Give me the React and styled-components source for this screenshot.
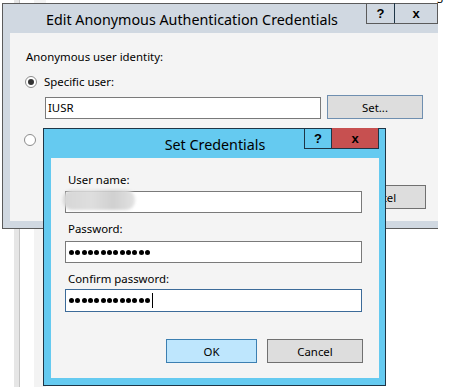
import React from 'react'
import styled, { createGlobalStyle } from 'styled-components'

const GlobalStyle = createGlobalStyle`
  html, body {
    margin: 0;
    padding: 0;
    background: #ffffff;
  }
  body {
    font-family: "Noto Sans", "Open Sans", sans-serif;
    font-size: 12px;
    color: #000;
  }
`

const font = `"Noto Sans", "Open Sans", sans-serif`

const Desktop = styled.div`
  position: relative;
  width: 459px;
  height: 387px;
  overflow: hidden;
  background: #fff;
`

/* the IIS manager list behind the dialogs */
const ListRow = styled.div`
  position: absolute;
  left: 42px;
  top: -12px;
  display: flex;
  font-family: ${font};
  font-size: 11.5px;
  line-height: 15px;
  white-space: nowrap;
  span:nth-child(1) { width: 194px; }
  span:nth-child(2) { width: 106px; }
`

const Splitter = styled.div`
  position: absolute;
  left: 14px;
  top: 0;
  width: 6px;
  height: 387px;
  background: #e6e6e6;
  border-right: 1px solid #c4c4c4;
  box-sizing: border-box;
`

const Pane = styled.div`
  position: absolute;
  left: 34px;
  top: 0;
  width: 12px;
  height: 387px;
  background: #f3f3f3;
`

const Window = styled.div`
  position: absolute;
  left: ${p => p.$x}px;
  top: ${p => p.$y}px;
  width: ${p => p.$w}px;
  height: ${p => p.$h}px;
  box-sizing: border-box;
  display: flex;
  flex-direction: column;
  background: ${p => p.$frame};
  border: 1px solid ${p => p.$edge};
  border-right: ${p => (p.$cut ? 'none' : `1px solid ${p.$edge}`)};
  padding: 0 ${p => (p.$cut ? 0 : 6)}px 7px 7px;
`

const TitleBar = styled.div`
  position: relative;
  flex: 0 0 29px;
  display: flex;
  align-items: center;
  justify-content: ${p => (p.$center ? 'center' : 'flex-start')};
  padding-left: ${p => (p.$center ? 0 : 36)}px;
  padding-top: 2px;
  box-sizing: border-box;
`

const TitleText = styled.div`
  font-family: ${font};
  font-size: 14.3px;
  color: #000;
  white-space: nowrap;
`

const Caption = styled.div`
  position: absolute;
  top: -1px;
  right: 0;
  display: flex;
  border: 1px solid ${p => p.$edge};
  border-top: none;
`

const CapButton = styled.div`
  width: ${p => p.$w}px;
  height: 20px;
  display: flex;
  align-items: center;
  justify-content: center;
  background: ${p => p.$bg || 'transparent'};
  font-family: "Liberation Sans", Arial, sans-serif;
  font-weight: bold;
  font-size: 13px;
  color: #000;
  & + & {
    border-left: 1px solid ${p => p.$edge};
  }
`

const Body = styled.div`
  flex: 1;
  background: #f4f4f4;
  box-sizing: border-box;
  display: flex;
  flex-direction: column;
  padding: ${p => p.$pad};
  font-family: ${font};
  font-size: 11.4px;
`

const Label = styled.div`
  line-height: 15px;
  height: 15px;
  white-space: nowrap;
  margin-left: ${p => p.$indent || 0}px;
  margin-top: ${p => p.$mt || 0}px;
`

const RadioRow = styled.div`
  display: flex;
  align-items: center;
  gap: 7px;
  height: 15px;
  margin-top: ${p => p.$mt || 0}px;
  margin-left: ${p => p.$indent || 0}px;
`

const Radio = styled.span`
  width: 12px;
  height: 12px;
  box-sizing: border-box;
  border-radius: 50%;
  border: 1px solid #8c8c8c;
  background: #fff;
  display: flex;
  align-items: center;
  justify-content: center;
  &::after {
    content: '';
    width: 6px;
    height: 6px;
    border-radius: 50%;
    background: ${p => (p.$on ? '#333' : 'transparent')};
  }
`

const FieldRow = styled.div`
  display: flex;
  align-items: center;
  gap: 6px;
  margin-top: ${p => p.$mt || 0}px;
  margin-left: ${p => p.$indent || 0}px;
`

const TextBox = styled.div`
  position: relative;
  width: ${p => p.$w}px;
  height: ${p => p.$h || 22}px;
  box-sizing: border-box;
  background: #fff;
  border: 1px solid ${p => (p.$focus ? '#3c6b99' : '#7a7a7a')};
  display: flex;
  align-items: center;
  padding-left: 2px;
  margin-top: ${p => p.$mt || 0}px;
  margin-left: ${p => p.$indent || 0}px;
`

const Smudge = styled.span`
  position: absolute;
  left: -3px;
  top: -2px;
  width: 72px;
  height: 20px;
  border-radius: 9px;
  background: linear-gradient(90deg, #d6d6d6 0%, #dedede 40%, #d0d0d0 70%, #e2e2e2 100%);
  filter: blur(1.5px);
`

const Dots = styled.div`
  display: flex;
  gap: 1.35px;
  padding-left: 1px;
`

const Dot = styled.span`
  width: 5px;
  height: 5px;
  border-radius: 50%;
  background: #000;
`

const Caret = styled.span`
  width: 1px;
  height: 15px;
  background: #000;
  margin-left: 2px;
`

const Button = styled.div`
  width: ${p => p.$w}px;
  height: 24px;
  box-sizing: border-box;
  display: flex;
  align-items: center;
  justify-content: center;
  background: ${p => (p.$primary ? '#bee6fd' : '#dddddd')};
  border: 1px solid ${p => (p.$primary ? '#3c7fb1' : p.$hint ? '#6f8fb0' : '#707070')};
`

const ButtonRow = styled.div`
  display: flex;
  justify-content: flex-end;
  gap: ${p => p.$gap}px;
  margin-top: auto;
  margin-right: ${p => p.$mr}px;
`

const PasswordDots = ({ n }) => (
  <Dots>
    {Array.from({ length: n }).map((_, i) => (
      <Dot key={i} />
    ))}
  </Dots>
)

export default function App() {
  return (
    <Desktop>
      <GlobalStyle />
      <ListRow>
        <span>Direct Authentication</span>
        <span>Disabled</span>
        <span>HTTP 401 Challenge</span>
      </ListRow>
      <Splitter />
      <Pane />

      <Window $x={2} $y={3} $w={436} $h={226} $frame="#d0d8e1" $edge="#5b5b5b" $cut>
        <TitleBar>
          <TitleText>Edit Anonymous Authentication Credentials</TitleText>
          <Caption $edge="#5b5b5b">
            <CapButton $w={27} $edge="#5b5b5b">?</CapButton>
            <CapButton $w={42} $edge="#5b5b5b">x</CapButton>
          </Caption>
        </TitleBar>
        <Body $pad="16px 0 12px 0">
          <Label $indent={16}>Anonymous user identity:</Label>
          <RadioRow $mt={10} $indent={15}>
            <Radio $on />
            <span>Specific user:</span>
          </RadioRow>
          <FieldRow $mt={6} $indent={35}>
            <TextBox $w={276} $mt={1}>IUSR</TextBox>
            <Button $w={96} $hint>Set...</Button>
          </FieldRow>
          <RadioRow $mt={13} $indent={14}>
            <Radio />
          </RadioRow>
          <ButtonRow $gap={9} $mr={12}>
            <Button $w={95}>OK</Button>
            <Button $w={95}>Cancel</Button>
          </ButtonRow>
        </Body>
      </Window>

      <Window $x={43} $y={128} $w={343} $h={258} $frame="#65caf0" $edge="#1e3546">
        <TitleBar $center>
          <TitleText>Set Credentials</TitleText>
          <Caption $edge="#1e3546">
            <CapButton $w={26} $edge="#1e3546">?</CapButton>
            <CapButton $w={46} $edge="#1e3546" $bg="#c75050">x</CapButton>
          </Caption>
        </TitleBar>
        <Body $pad="14px 0 15px 14px">
          <Label $indent={3}>User name:</Label>
          <TextBox $w={297} $mt={4}>
            <Smudge />
          </TextBox>
          <Label $indent={3} $mt={8}>Password:</Label>
          <TextBox $w={297} $mt={5}>
            <PasswordDots n={13} />
          </TextBox>
          <Label $indent={3} $mt={8}>Confirm password:</Label>
          <TextBox $w={297} $h={23} $mt={3} $focus>
            <PasswordDots n={13} />
            <Caret />
          </TextBox>
          <ButtonRow $gap={10} $mr={16}>
            <Button $w={91} $primary>OK</Button>
            <Button $w={96}>Cancel</Button>
          </ButtonRow>
        </Body>
      </Window>
    </Desktop>
  )
}
